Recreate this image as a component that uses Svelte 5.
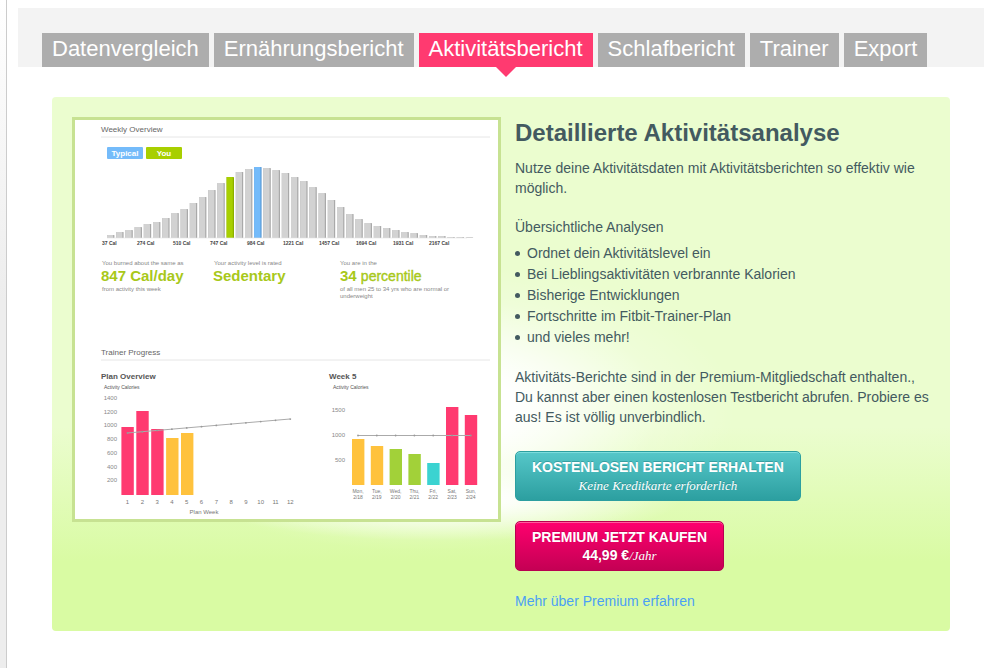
<script lang="ts">
  // Premium upsell page: report tabs on top, green promo panel below.

  interface Tab {
    id: string;
    label: string;
  }

  const tabs: Tab[] = [
    { id: 'compare', label: 'Datenvergleich' },
    { id: 'food', label: 'Ernährungsbericht' },
    { id: 'activity', label: 'Aktivitätsbericht' },
    { id: 'sleep', label: 'Schlafbericht' },
    { id: 'trainer', label: 'Trainer' },
    { id: 'export', label: 'Export' },
  ];

  let active = $state('activity');

  const features = [
    'Ordnet dein Aktivitätslevel ein',
    'Bei Lieblingsaktivitäten verbrannte Kalorien',
    'Bisherige Entwicklungen',
    'Fortschritte im Fitbit-Trainer-Plan',
    'und vieles mehr!',
  ];

  // Weekly overview histogram, bar heights in px
  const histogram = [
    3, 6, 8, 11, 14, 16, 20, 25, 29, 35, 41, 48, 55, 61, 66, 69, 71, 70, 68, 65,
    61, 57, 51, 45, 38, 31, 24, 19, 15, 12, 10, 8, 6, 5, 3, 2, 2, 1, 1, 0.5,
  ];
  const YOU = 13;
  const TYPICAL = 16;

  const calories = [
    { x: 27, n: 37 }, { x: 62, n: 274 }, { x: 98, n: 510 }, { x: 135, n: 747 },
    { x: 172, n: 984 }, { x: 208, n: 1221 }, { x: 244, n: 1457 },
    { x: 281, n: 1694 }, { x: 318, n: 1931 }, { x: 354, n: 2167 },
  ];

  // Trainer plan, top edge of each bar
  const plan = [
    { top: 307, fill: '#ff3a70' },
    { top: 291, fill: '#ff3a70' },
    { top: 309, fill: '#ff3a70' },
    { top: 318, fill: '#ffc23d' },
    { top: 313, fill: '#ffc23d' },
  ];
  const planScale = [1400, 1200, 1000, 800, 600, 400, 200];
  const weeks = Array.from({ length: 12 }, (_, i) => i + 1);

  const days = [
    { day: 'Mon,', date: '2/18', top: 319, fill: '#ffc23d' },
    { day: 'Tue,', date: '2/19', top: 326, fill: '#ffc23d' },
    { day: 'Wed,', date: '2/20', top: 329, fill: '#a2d139' },
    { day: 'Thu,', date: '2/21', top: 334, fill: '#a2d139' },
    { day: 'Fri,', date: '2/22', top: 343, fill: '#3bd3d1' },
    { day: 'Sat,', date: '2/23', top: 287, fill: '#ff3a70' },
    { day: 'Sun,', date: '2/24', top: 295, fill: '#ff3a70' },
  ];

  function barFill(i: number) {
    if (i === YOU) return '#a8cf00';
    if (i === TYPICAL) return '#74bbfa';
    return '#d2d2d2';
  }

  function barShade(i: number) {
    if (i === YOU) return '#8cae00';
    if (i === TYPICAL) return '#5b9bd6';
    return '#a9a9a9';
  }
</script>

<div class="page">
  <div class="edge"></div>
  <main>
    <nav>
      {#each tabs as tab (tab.id)}
        <a
          href="#/{tab.id}"
          class:active={active === tab.id}
          onclick={() => (active = tab.id)}
        >{tab.label}</a>
      {/each}
    </nav>

    <section class="panel">
      <div class="preview">
        <svg viewBox="0 0 423 399" role="img" aria-label="Weekly Overview">
          <!-- weekly overview -->
          <text class="title" x="26" y="12">Weekly Overview</text>
          <path class="rule" d="M26 17H415" />
          <rect x="32" y="27" width="36" height="12" rx="1" fill="#74bbfa" />
          <text class="legend" x="50" y="36">Typical</text>
          <rect x="71" y="27" width="36" height="12" rx="1" fill="#a8cf00" />
          <text class="legend" x="89" y="36">You</text>

          {#each histogram as h, i}
            <rect x={32 + i * 9.2} y={118 - h} width="7.4" height={h} rx="0.6" fill={barShade(i)} />
            <rect x={32 + i * 9.2} y={118 - h} width="6.2" height={h} rx="0.6" fill={barFill(i)} />
          {/each}
          <path d="M32 118H392" stroke="#e2e2e2" stroke-width="0.6" />
          {#each calories as c}
            <text class="cal" x={c.x} y="125">{c.n} Cal</text>
          {/each}

          <text class="note" x="27" y="145">You burned about the same as</text>
          <text class="big" x="26" y="161">847 Cal/day</text>
          <text class="note" x="27" y="171">from activity this week</text>
          <text class="note" x="139" y="145">Your activity level is rated</text>
          <text class="big" x="138" y="161">Sedentary</text>
          <text class="note" x="265" y="145">You are in the</text>
          <text class="big" x="265" y="161">34 <tspan class="thin">percentile</tspan></text>
          <text class="note" x="265" y="171">of all men 25 to 34 yrs who are normal or</text>
          <text class="note" x="265" y="178">underweight</text>

          <!-- trainer progress -->
          <text class="title" x="26" y="235">Trainer Progress</text>
          <path class="rule" d="M26 240H415" />

          <text class="head" x="26" y="259">Plan Overview</text>
          <text class="unit" x="29" y="269">Activity Calories</text>
          {#each planScale as n, i}
            <text class="scale" x="42" y={280 + i * 13.7}>{n}</text>
          {/each}
          {#each plan as bar, i}
            <rect x={46.4 + i * 14.9} y={bar.top} width="12.4" height={375 - bar.top} fill={bar.fill} />
          {/each}
          <path class="goal" d="M52 313L215 299" />
          {#each weeks as w, i}
            <circle cx={52.5 + i * 14.8} cy={313 - i * 1.27} r="0.9" fill="#999" />
            <text class="tick" x={52.5 + i * 14.8} y="384">{w}</text>
          {/each}
          <text class="tick" x="129" y="394">Plan Week</text>

          <text class="head" x="254" y="259">Week 5</text>
          <text class="unit" x="258" y="269">Activity Calories</text>
          <text class="scale" x="270" y="292">1500</text>
          <text class="scale" x="270" y="317">1000</text>
          <text class="scale" x="270" y="342">500</text>
          {#each days as d, i}
            <rect x={277 + i * 18.8} y={d.top} width="12.4" height={365 - d.top} fill={d.fill} />
            <text class="date" x={283 + i * 18.8} y="373">{d.day}</text>
            <text class="date" x={283 + i * 18.8} y="379">{d.date}</text>
          {/each}
          <path class="goal" d="M283 315.5H396" />
          {#each days as d, i}
            <circle cx={283 + i * 18.8} cy="315.5" r="0.9" fill="#999" />
          {/each}
        </svg>
      </div>

      <div class="copy">
        <h1>Detaillierte Aktivitätsanalyse</h1>
        <p>Nutze deine Aktivitätsdaten mit Aktivitätsberichten so effektiv wie möglich.</p>
        <h2>Übersichtliche Analysen</h2>
        <ul>
          {#each features as feature}
            <li>{feature}</li>
          {/each}
        </ul>
        <p>
          Aktivitäts-Berichte sind in der Premium-Mitgliedschaft enthalten., Du
          kannst aber einen kostenlosen Testbericht abrufen. Probiere es aus! Es
          ist völlig unverbindlich.
        </p>
        <button type="button" class="free">
          <span>KOSTENLOSEN BERICHT ERHALTEN</span>
          <span><em>Keine Kreditkarte erforderlich</em></span>
        </button>
        <button type="button" class="buy">
          <span>PREMIUM JETZT KAUFEN</span>
          <span>44,99 €<em>/Jahr</em></span>
        </button>
        <a class="more" href="#/premium">Mehr über Premium erfahren</a>
      </div>
    </section>
  </main>
</div>

<style>
  :global(body) {
    margin: 0;
    background: #fff;
  }
  .page {
    display: flex;
    min-height: 100vh;
    font-family: "Liberation Sans", Arial, Helvetica, sans-serif;
    font-size: 14px;
    line-height: 20px;
    color: #435a60;
  }
  .edge {
    flex: none;
    width: 6px;
    border-right: 1px solid #ccc;
    background: linear-gradient(#fff, #ededed 300px);
  }
  main {
    flex: 1;
    padding: 8px 5px 0 11px;
  }

  nav {
    display: flex;
    gap: 5px;
    padding: 25px 24px 0;
    background: #f3f3f3;
  }
  nav a {
    padding: 0 10px 3px;
    background: #adadad;
    color: #fff;
    font-size: 22px;
    line-height: 31px;
    text-decoration: none;
    white-space: nowrap;
    position: relative;
  }
  nav a.active {
    background: #ff3a70;
  }
  nav a.active::after {
    content: "";
    position: absolute;
    top: 100%;
    left: 50%;
    margin-left: -10px;
    border: 10px solid transparent;
    border-top-color: #ff3a70;
    border-bottom: 0;
  }

  .panel {
    display: flex;
    align-items: flex-start;
    gap: 14px;
    margin: 30px 34px 36px;
    padding: 20px;
    border-radius: 4px;
    background:
      radial-gradient(ellipse 240px 42px at 390px 402px, #fff 20%, rgba(255, 255, 255, 0) 100%),
      radial-gradient(ellipse 370px 170px at 370px 310px, #fff 25%, rgba(255, 255, 255, 0.7) 42%, rgba(255, 255, 255, 0.2) 65%, rgba(255, 255, 255, 0) 85%),
      linear-gradient(#ebfdcf 330px, #d9fba3 465px);
  }
  .preview {
    flex: none;
    width: 423px;
    border: 3px solid #c7e292;
    background: #fff;
  }
  .preview svg {
    display: block;
    width: 100%;
  }

  .title { font-size: 8px; fill: #666; }
  .head { font-size: 8px; font-weight: bold; fill: #555; }
  .legend { font-size: 8px; font-weight: bold; fill: #fff; text-anchor: middle; }
  .cal { font-size: 5px; font-weight: bold; fill: #444; }
  .note { font-size: 6px; fill: #888; }
  .big { font-size: 15px; font-weight: bold; fill: #a8c81a; }
  .thin { font-size: 14px; font-weight: normal; stroke: #a8c81a; stroke-width: 0.4; }
  .unit { font-size: 5px; fill: #555; }
  .scale { font-size: 6px; fill: #888; text-anchor: end; }
  .tick { font-size: 6px; fill: #777; text-anchor: middle; }
  .date { font-size: 5px; fill: #777; text-anchor: middle; }
  .rule { stroke: #e6e6e6; }
  .goal { stroke: #aaa; fill: none; }

  .copy {
    flex: 1;
    display: flex;
    flex-direction: column;
    align-items: flex-start;
  }
  h1 {
    margin: 0 0 9px;
    font-size: 24px;
    line-height: 32px;
  }
  p {
    margin: 0 0 19px;
  }
  h2 {
    margin: 0 0 6px;
    font-size: 14px;
    font-weight: normal;
  }
  ul {
    margin: 0 0 19px;
    padding: 0 0 0 12px;
    list-style: none;
    line-height: 21px;
  }
  li {
    display: flex;
    align-items: center;
  }
  li::before {
    content: "";
    width: 5px;
    height: 5px;
    margin: 0 7px 0 -12px;
    border-radius: 50%;
    background: currentColor;
  }

  button {
    display: flex;
    flex-direction: column;
    align-items: center;
    margin: 5px 0 15px;
    padding: 6px 16px;
    border: 1px solid;
    border-radius: 5px;
    color: #fff;
    font: bold 14px/18px "Liberation Sans", Arial, sans-serif;
    cursor: pointer;
  }
  button em {
    font: italic 13px/1 "Liberation Serif", Georgia, serif;
  }
  .free {
    border-color: #2c9fa0;
    background: linear-gradient(#56c7c9, #2c9fa0);
    box-shadow: inset 0 1px 0 #7ddcdc;
    text-shadow: 0 -1px 0 rgba(0, 80, 80, 0.3);
  }
  .buy {
    border-color: #b80050;
    background: linear-gradient(#ff006e, #c40054);
    box-shadow: inset 0 1px 0 #ff5c9e;
    text-shadow: 0 -1px 0 rgba(100, 0, 40, 0.3);
  }
  .more {
    margin-top: 5px;
    color: #4b9ff5;
    text-decoration: none;
  }
</style>
